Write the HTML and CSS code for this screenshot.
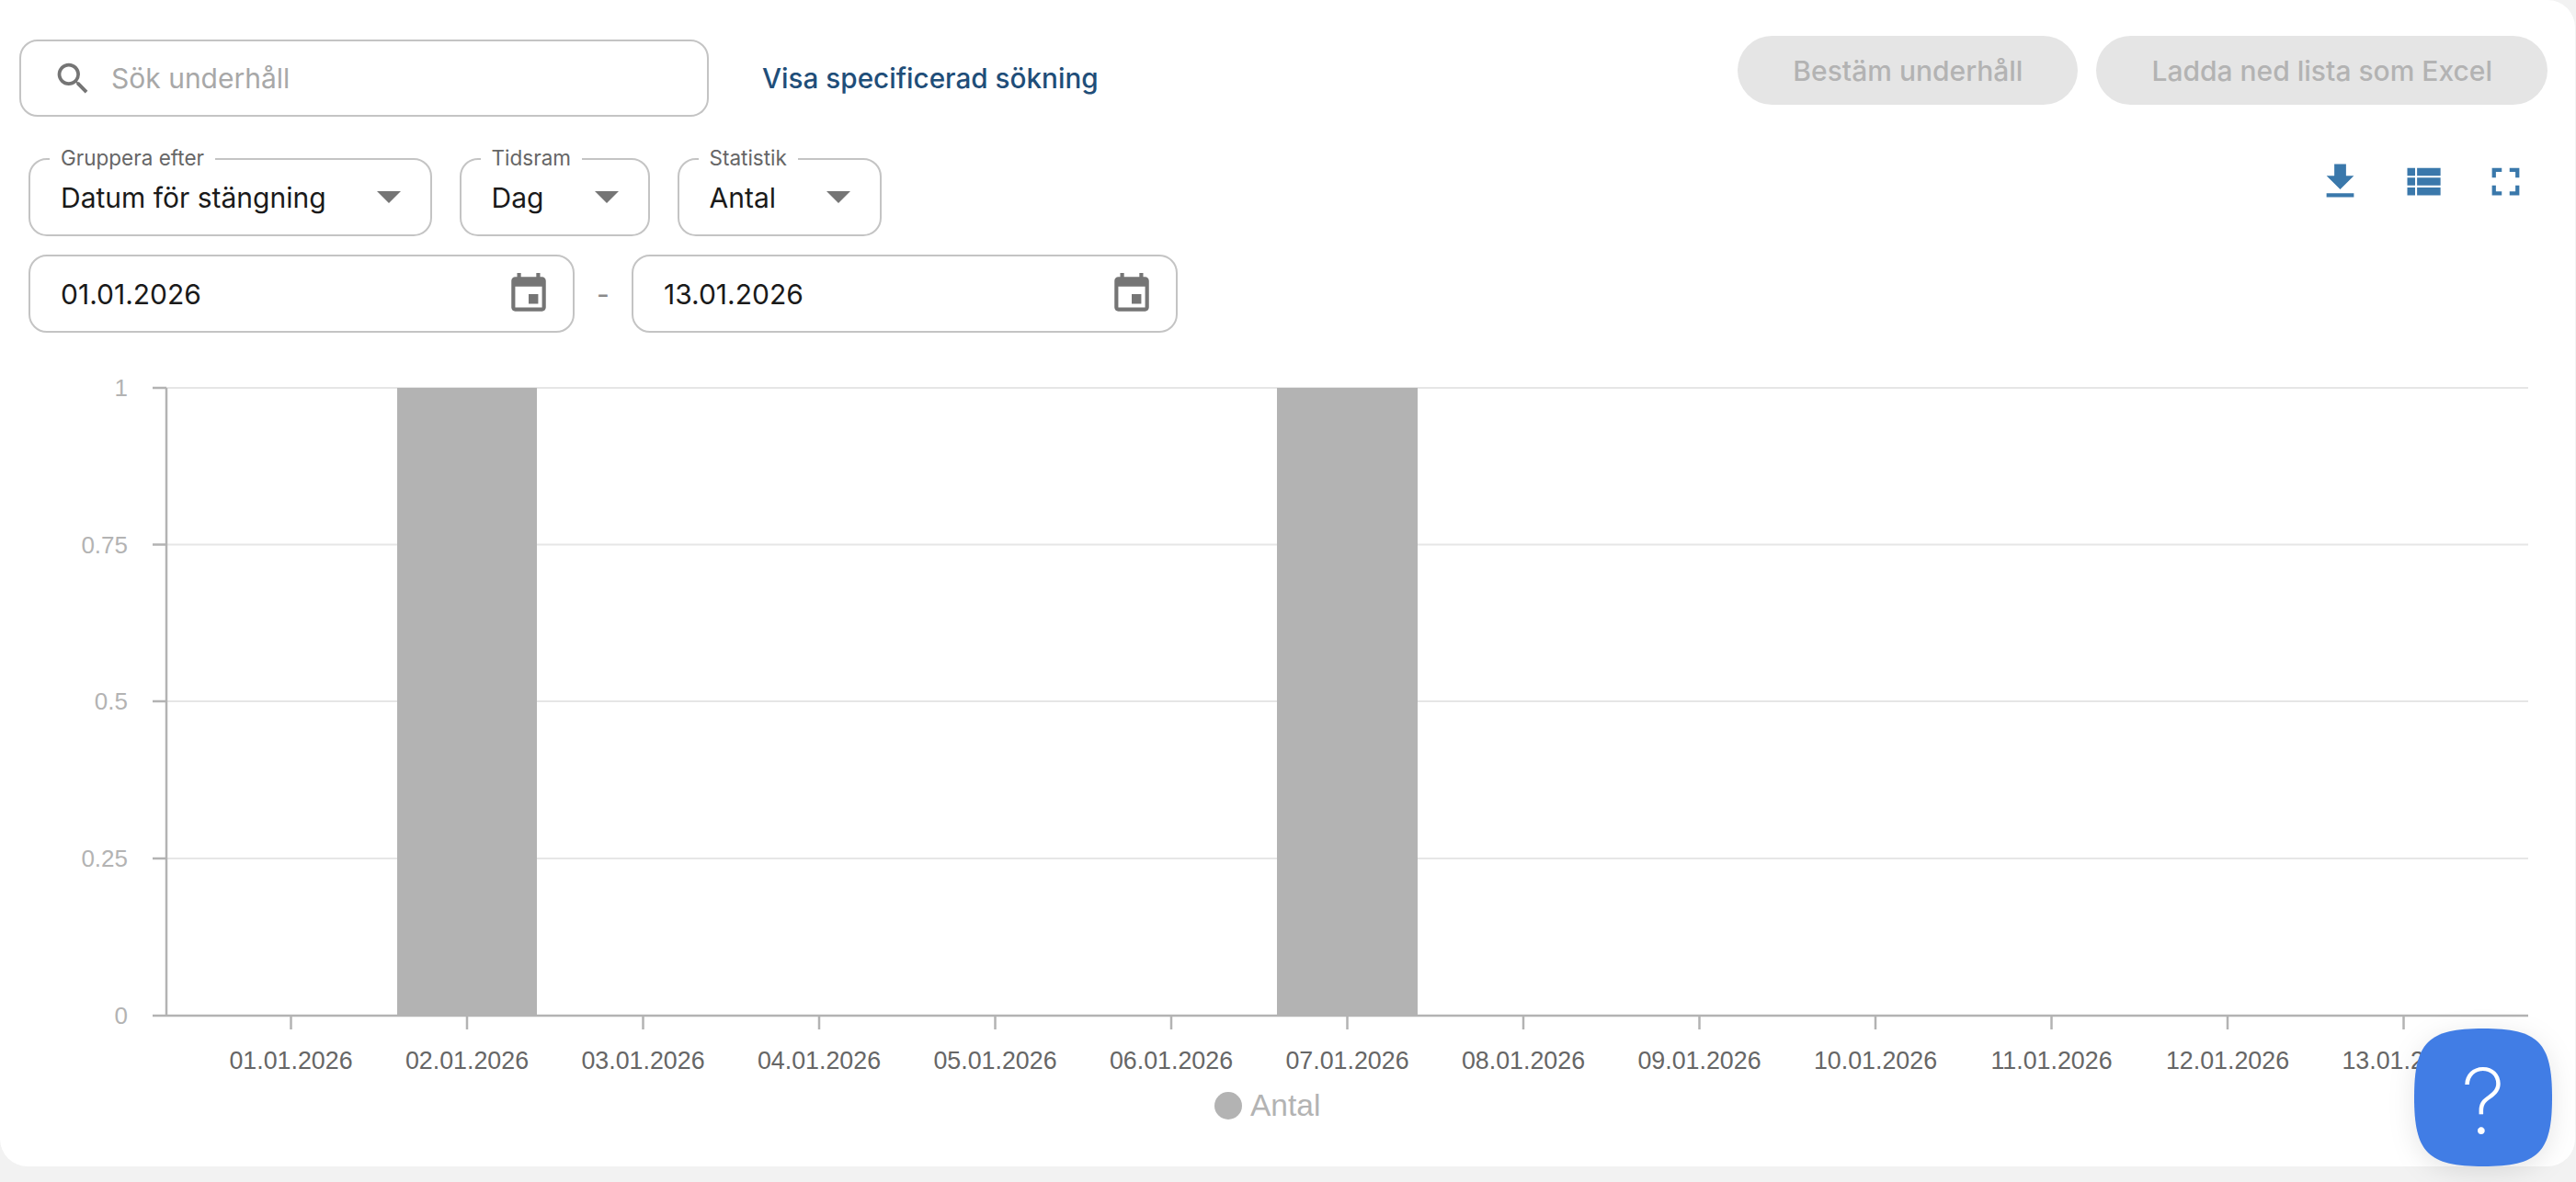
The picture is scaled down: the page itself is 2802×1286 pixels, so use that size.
FILE: index.html
```html
<!DOCTYPE html>
<html lang="sv">
<head>
    <meta charset="UTF-8">
    <title>Underhåll</title>
    <link rel="stylesheet" href="styles.css">
</head>
<body>
    <div class="card">
        <!-- Search and actions -->
        <div class="top-row">
            <div class="search-group">
                <div class="search-box">
                    <svg class="search-icon" viewBox="0 0 24 24"><path d="M15.5 14h-.79l-.28-.27A6.47 6.47 0 0 0 16 9.5 6.5 6.5 0 1 0 9.5 16c1.61 0 3.09-.59 4.23-1.57l.27.28v.79l5 4.99L20.49 19l-4.99-5zm-6 0C7.01 14 5 11.99 5 9.5S7.01 5 9.5 5 14 7.01 14 9.5 11.99 14 9.5 14z"/></svg>
                    <span class="placeholder">Sök underhåll</span>
                </div>
                <a class="advanced-link" href="#">Visa specificerad sökning</a>
            </div>
            <div class="actions">
                <button class="pill-button" disabled>Bestäm underhåll</button>
                <button class="pill-button" disabled>Ladda ned lista som Excel</button>
            </div>
        </div>

        <!-- Chart filters -->
        <div class="filter-row">
            <div class="filters">
                <div class="select-box">
                    <span class="float-label">Gruppera efter</span>
                    <span class="select-value">Datum för stängning</span>
                    <span class="caret"></span>
                </div>
                <div class="select-box">
                    <span class="float-label">Tidsram</span>
                    <span class="select-value">Dag</span>
                    <span class="caret"></span>
                </div>
                <div class="select-box">
                    <span class="float-label">Statistik</span>
                    <span class="select-value">Antal</span>
                    <span class="caret"></span>
                </div>
            </div>
            <div class="chart-tools">
                <svg class="tool-icon" viewBox="0 0 24 24"><path d="M19 9h-4V3H9v6H5l7 7 7-7zM5 18v2h14v-2H5z"/></svg>
                <svg class="tool-icon" viewBox="0 0 24 24"><path d="M4 14h4v-4H4v4zm0 5h4v-4H4v4zM4 9h4V5H4v4zm5 5h12v-4H9v4zm0 5h12v-4H9v4zM9 5v4h12V5H9z"/></svg>
                <svg class="tool-icon" viewBox="0 0 24 24"><path d="M7 14H5v5h5v-2H7v-3zm-2-4h2V7h3V5H5v5zm12 7h-3v2h5v-5h-2v3zM14 5v2h3v3h2V5h-5z"/></svg>
            </div>
        </div>

        <div class="date-row">
            <div class="date-box">
                <span class="date-value">01.01.2026</span>
                <svg class="date-icon" viewBox="0 0 24 24"><path d="M17 12h-5v5h5v-5zM16 1v2H8V1H6v2H5c-1.11 0-1.99.9-1.99 2L3 19c0 1.1.89 2 2 2h14c1.1 0 2-.9 2-2V5c0-1.1-.9-2-2-2h-1V1h-2zm3 18H5V8h14v11z"/></svg>
            </div>
            <span class="date-dash">-</span>
            <div class="date-box">
                <span class="date-value">13.01.2026</span>
                <svg class="date-icon" viewBox="0 0 24 24"><path d="M17 12h-5v5h5v-5zM16 1v2H8V1H6v2H5c-1.11 0-1.99.9-1.99 2L3 19c0 1.1.89 2 2 2h14c1.1 0 2-.9 2-2V5c0-1.1-.9-2-2-2h-1V1h-2zm3 18H5V8h14v11z"/></svg>
            </div>
        </div>

        <!-- Chart, drawn in page coordinates -->
        <svg class="chart" viewBox="0 400 2801 869">
            <g class="grid">
                <line x1="181" y1="422" x2="2750" y2="422"/>
                <line x1="181" y1="592.5" x2="2750" y2="592.5"/>
                <line x1="181" y1="763" x2="2750" y2="763"/>
                <line x1="181" y1="934" x2="2750" y2="934"/>
            </g>
            <rect class="bar" x="432" y="422" width="152" height="683"/>
            <rect class="bar" x="1389" y="422" width="153" height="683"/>
            <g class="axis">
                <line x1="181" y1="422" x2="181" y2="1105"/>
                <line x1="166" y1="1105" x2="2750" y2="1105"/>
                <line x1="166" y1="422" x2="181" y2="422"/>
                <line x1="166" y1="592.5" x2="181" y2="592.5"/>
                <line x1="166" y1="763" x2="181" y2="763"/>
                <line x1="166" y1="934" x2="181" y2="934"/>
                <line x1="316.5" y1="1105" x2="316.5" y2="1120"/>
                <line x1="508" y1="1105" x2="508" y2="1120"/>
                <line x1="699.5" y1="1105" x2="699.5" y2="1120"/>
                <line x1="891" y1="1105" x2="891" y2="1120"/>
                <line x1="1082.5" y1="1105" x2="1082.5" y2="1120"/>
                <line x1="1274" y1="1105" x2="1274" y2="1120"/>
                <line x1="1465.5" y1="1105" x2="1465.5" y2="1120"/>
                <line x1="1657" y1="1105" x2="1657" y2="1120"/>
                <line x1="1848.5" y1="1105" x2="1848.5" y2="1120"/>
                <line x1="2040" y1="1105" x2="2040" y2="1120"/>
                <line x1="2231.5" y1="1105" x2="2231.5" y2="1120"/>
                <line x1="2423" y1="1105" x2="2423" y2="1120"/>
                <line x1="2614.5" y1="1105" x2="2614.5" y2="1120"/>
            </g>
            <g class="y-labels">
                <text x="139" y="431">1</text>
                <text x="139" y="602">0.75</text>
                <text x="139" y="772">0.5</text>
                <text x="139" y="943">0.25</text>
                <text x="139" y="1114">0</text>
            </g>
            <g class="x-labels">
                <text x="316.5" y="1163">01.01.2026</text>
                <text x="508" y="1163">02.01.2026</text>
                <text x="699.5" y="1163">03.01.2026</text>
                <text x="891" y="1163">04.01.2026</text>
                <text x="1082.5" y="1163">05.01.2026</text>
                <text x="1274" y="1163">06.01.2026</text>
                <text x="1465.5" y="1163">07.01.2026</text>
                <text x="1657" y="1163">08.01.2026</text>
                <text x="1848.5" y="1163">09.01.2026</text>
                <text x="2040" y="1163">10.01.2026</text>
                <text x="2231.5" y="1163">11.01.2026</text>
                <text x="2423" y="1163">12.01.2026</text>
                <text x="2614.5" y="1163">13.01.2026</text>
            </g>
            <circle class="legend-dot" cx="1336" cy="1203" r="15"/>
            <text class="legend-label" x="1360" y="1214">Antal</text>
        </svg>

        <button class="help-button">
            <svg class="help-shape" viewBox="0 0 150 150"><path d="M75 0C135 0 150 15 150 75C150 135 135 150 75 150C15 150 0 135 0 75C0 15 15 0 75 0Z"/></svg>
            <span class="help-mark">?</span>
        </button>
    </div>
</body>
</html>
```

FILE: styles.css
```css
* {
    box-sizing: border-box;
}

body {
    margin: 0;
    height: 1286px;
    overflow: hidden;
    background: #f2f2f2;
    font-family: Inter, "Liberation Sans", sans-serif;
}

.card {
    position: relative;
    width: 2801px;
    height: 1269px;
    padding-top: 39px;
    background: #fff;
    border-radius: 0 30px 30px 30px;
}

/* Top row */
.top-row {
    display: flex;
    justify-content: space-between;
    align-items: flex-start;
    padding: 0 30px 0 21px;
}

.search-group {
    display: flex;
    align-items: center;
    gap: 58px;
    margin-top: 4px;
}

.search-box {
    display: flex;
    align-items: center;
    gap: 19px;
    width: 750px;
    height: 84px;
    padding-left: 34px;
    border: 2px solid #c4c4c4;
    border-radius: 20px;
}

.search-icon {
    width: 45px;
    height: 45px;
    fill: #757575;
}

.placeholder {
    font-size: 30px;
    color: #a8a8a8;
}

.advanced-link {
    font-size: 29.7px;
    font-weight: 500;
    color: #1f4e79;
    text-decoration: none;
}

.actions {
    display: flex;
    gap: 20px;
}

.pill-button {
    height: 75px;
    padding: 0 60px;
    border: none;
    border-radius: 38px;
    background: #e5e5e5;
    color: #b3b3b3;
    font-family: inherit;
    font-size: 30px;
    font-weight: 500;
}

/* Filters */
.filter-row {
    display: flex;
    justify-content: space-between;
    align-items: flex-start;
    margin-top: 45px;
    padding: 0 50px 0 31px;
}

.filters {
    display: flex;
    gap: 30px;
}

.select-box {
    position: relative;
    display: flex;
    align-items: center;
    height: 85px;
    padding: 0 32px 0 33px;
    border: 2px solid #c4c4c4;
    border-radius: 20px;
}

.float-label {
    position: absolute;
    top: -15px;
    left: 21px;
    padding: 0 12px;
    background: #fff;
    font-size: 22.5px;
    line-height: 26px;
    color: #666;
}

.select-value,
.date-value {
    font-size: 30px;
    color: #1a1a1a;
}

.caret {
    width: 0;
    height: 0;
    margin-left: 55px;
    border-top: 13px solid #757575;
    border-left: 13px solid transparent;
    border-right: 13px solid transparent;
}

.chart-tools {
    display: flex;
    gap: 39px;
}

.tool-icon {
    width: 51px;
    height: 51px;
    fill: #3a78ab;
}

/* Dates */
.date-row {
    display: flex;
    align-items: center;
    margin-top: 20px;
    padding-left: 31px;
}

.date-box {
    display: flex;
    justify-content: space-between;
    align-items: center;
    width: 594px;
    height: 85px;
    padding: 0 23px 0 33px;
    border: 2px solid #c4c4c4;
    border-radius: 20px;
}

.date-icon {
    width: 50px;
    height: 50px;
    fill: #757575;
}

.date-dash {
    width: 62px;
    text-align: center;
    font-size: 30px;
    color: #8a8a8a;
}

/* Chart */
.chart {
    display: block;
    position: absolute;
    top: 400px;
    left: 0;
    width: 2801px;
    height: 869px;
}

.grid line {
    stroke: #e6e6e6;
    stroke-width: 2;
}

.bar {
    fill: #b3b3b3;
}

.axis line {
    stroke: #b3b3b3;
    stroke-width: 2.5;
}

.y-labels text {
    font-family: "Liberation Sans", Arial, sans-serif;
    font-size: 26px;
    fill: #b3b3b3;
    text-anchor: end;
}

.x-labels text {
    font-family: "Liberation Sans", Arial, sans-serif;
    font-size: 26.8px;
    fill: #666;
    text-anchor: middle;
}

.legend-dot {
    fill: #b3b3b3;
}

.legend-label {
    font-family: "Liberation Sans", Arial, sans-serif;
    font-size: 33.5px;
    fill: #b3b3b3;
}

/* Help button sits over the chart */
.help-button {
    position: absolute;
    right: 25px;
    bottom: 0;
    width: 150px;
    height: 150px;
    padding: 0;
    border: none;
    background: none;
    filter: drop-shadow(0 6px 14px rgba(0, 0, 0, 0.1));
}

.help-shape {
    position: absolute;
    top: 0;
    left: 0;
    width: 150px;
    height: 150px;
    fill: #417de5;
}

.help-mark {
    position: relative;
    top: 4px;
    font-family: Inter, sans-serif;
    font-size: 98px;
    font-weight: 200;
    color: #fff;
}
```
